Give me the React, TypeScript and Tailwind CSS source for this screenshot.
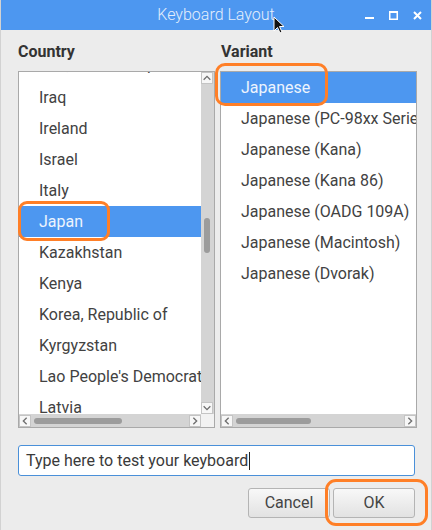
const countries = [
  'Iran, Islamic Republic of',
  'Iraq',
  'Ireland',
  'Israel',
  'Italy',
  'Japan',
  'Kazakhstan',
  'Kenya',
  'Korea, Republic of',
  'Kyrgyzstan',
  "Lao People's Democratic Republic",
  'Latvia',
  'Lebanon',
];

const variants = [
  'Japanese',
  'Japanese (PC-98xx Series)',
  'Japanese (Kana)',
  'Japanese (Kana 86)',
  'Japanese (OADG 109A)',
  'Japanese (Macintosh)',
  'Japanese (Dvorak)',
];

function Chevron({ dir }: { dir: 'up' | 'down' | 'left' | 'right' }) {
  const paths = {
    up: 'M2 8 L6 4 L10 8',
    down: 'M2 4 L6 8 L10 4',
    left: 'M8 2 L4 6 L8 10',
    right: 'M4 2 L8 6 L4 10',
  };
  return (
    <div className="flex h-[12px] w-[12px] items-center justify-center border border-[#c4c4c4] bg-[#f7f7f7]">
      <svg width="12" height="12" viewBox="0 0 12 12">
        <path d={paths[dir]} fill="none" stroke="#6f6f6f" strokeWidth="1.6" />
      </svg>
    </div>
  );
}

function HScrollbar({ thumbLeft, thumbWidth }: { thumbLeft: number; thumbWidth: number }) {
  return (
    <div className="flex h-[13px] flex-1 items-center bg-[#d4d4d4]">
      <Chevron dir="left" />
      <div className="relative h-full flex-1">
        <div
          className="absolute top-[4px] h-[6px] rounded-full bg-[#9c9c9c]"
          style={{ left: thumbLeft, width: thumbWidth }}
        />
      </div>
      <Chevron dir="right" />
    </div>
  );
}

export default function App() {
  return (
    <div
      className="relative h-[530px] w-[432px] overflow-hidden border-x border-[#d2d2d2] bg-[#ececec] text-[#424242]"
      style={{ fontFamily: 'Roboto, "Liberation Sans", sans-serif' }}
    >
      {/* Title bar */}
      <div className="relative flex h-[30px] items-center justify-center bg-[#4d97f0]">
        <span className="text-[16px] font-light text-[#e3eefc]">Keyboard Layout</span>
        <div className="absolute right-[9px] top-0 flex h-full items-center gap-[15px]">
          <svg width="9" height="9" viewBox="0 0 9 9">
            <rect x="0" y="6" width="9" height="2" fill="#fff" />
          </svg>
          <svg width="9" height="9" viewBox="0 0 9 9">
            <rect x="0.75" y="0.75" width="7.5" height="7.5" fill="none" stroke="#fff" strokeWidth="1.5" />
            <rect x="0" y="0" width="9" height="2" fill="#fff" />
          </svg>
          <svg width="9" height="9" viewBox="0 0 9 9">
            <path d="M1 1 L8 8 M8 1 L1 8" stroke="#fff" strokeWidth="2" />
          </svg>
        </div>
      </div>

      <div className="pl-[17px] pr-[16px]">
        {/* Headings */}
        <div className="mt-[12px] flex gap-[5px] text-[16px] font-bold leading-[19px] text-[#333]">
          <div className="w-[197px]">Country</div>
          <div className="w-[197px] pl-[2px]">Variant</div>
        </div>

        {/* Lists */}
        <div className="mt-[10px] flex gap-[5px]">
          <div className="flex h-[357px] w-[197px] flex-col border border-[#a9a9a9] bg-white">
            <div className="flex min-h-0 flex-1">
              <div className="min-w-0 flex-1 overflow-hidden">
                <div className="-mt-[21px]">
                  {countries.map((c, i) => (
                    <div
                      key={c}
                      className={`flex h-[31px] items-center whitespace-nowrap pl-[20px] text-[16px] ${
                        c === 'Japan' ? 'bg-[#4d97f0] text-[#eef4fd]' : ''
                      } ${i === 0 ? 'pb-[3px]' : ''}`}
                    >
                      {c}
                    </div>
                  ))}
                </div>
              </div>
              <div className="flex w-[13px] flex-col bg-[#d4d4d4]">
                <Chevron dir="up" />
                <div className="relative flex-1">
                  <div className="absolute left-[3px] top-[134px] h-[35px] w-[6px] rounded-full bg-[#9c9c9c]" />
                </div>
                <Chevron dir="down" />
              </div>
            </div>
            <div className="flex">
              <HScrollbar thumbLeft={3} thumbWidth={88} />
              <div className="h-[13px] w-[13px] bg-[#f2f2f2]" />
            </div>
          </div>

          <div className="flex h-[357px] w-[197px] flex-col border border-[#a9a9a9] bg-white">
            <div className="min-h-0 flex-1 overflow-hidden">
              {variants.map((v, i) => (
                <div
                  key={v}
                  className={`flex h-[31px] items-center whitespace-nowrap pl-[20px] text-[16px] ${
                    i === 0 ? 'bg-[#4d97f0] text-[#eef4fd]' : ''
                  }`}
                >
                  {v}
                </div>
              ))}
            </div>
            <div className="flex">
              <HScrollbar thumbLeft={3} thumbWidth={75} />
            </div>
          </div>
        </div>

        {/* Test input */}
        <div className="mt-[17px] flex h-[31px] items-center rounded-[3px] border border-[#4a90d9] bg-white pl-[7px] text-[16px] text-[#3a3a3a]">
          <span>Type here to test your keyboard</span>
          <span className="ml-[1px] h-[18px] w-[1px] bg-[#222]" />
        </div>

        {/* Buttons */}
        <div className="mt-[12px] flex justify-end gap-[3px]">
          <button className="h-[30px] w-[82px] rounded-[3px] border border-[#b4b4b4] bg-gradient-to-b from-[#f8f8f8] to-[#e2e2e2] text-[16px] text-[#444]">
            Cancel
          </button>
          <button className="h-[30px] w-[82px] rounded-[3px] border border-[#b4b4b4] bg-gradient-to-b from-[#f8f8f8] to-[#e2e2e2] text-[16px] text-[#444]">
            OK
          </button>
        </div>
      </div>

      {/* Orange annotation marks */}
      <div className="absolute left-[214px] top-[63px] h-[43px] w-[113px] rounded-[10px] border-[3px] border-[#ff7f27]" />
      <div className="absolute left-[17px] top-[201px] h-[40px] w-[92px] rounded-[9px] border-[3px] border-[#ff7f27]" />
      <div className="absolute left-[324px] top-[479px] h-[47px] w-[103px] rounded-[11px] border-[3px] border-[#ff7f27]" />

      {/* Mouse pointer */}
      <svg className="absolute left-[272px] top-[16px]" width="13" height="19" viewBox="0 0 13 19">
        <path d="M1 1 L1 15 L4.5 11.5 L7 17 L9 16 L6.5 10.5 L11 10.5 Z" fill="#111" stroke="#fff" strokeWidth="1" />
      </svg>
    </div>
  );
}
